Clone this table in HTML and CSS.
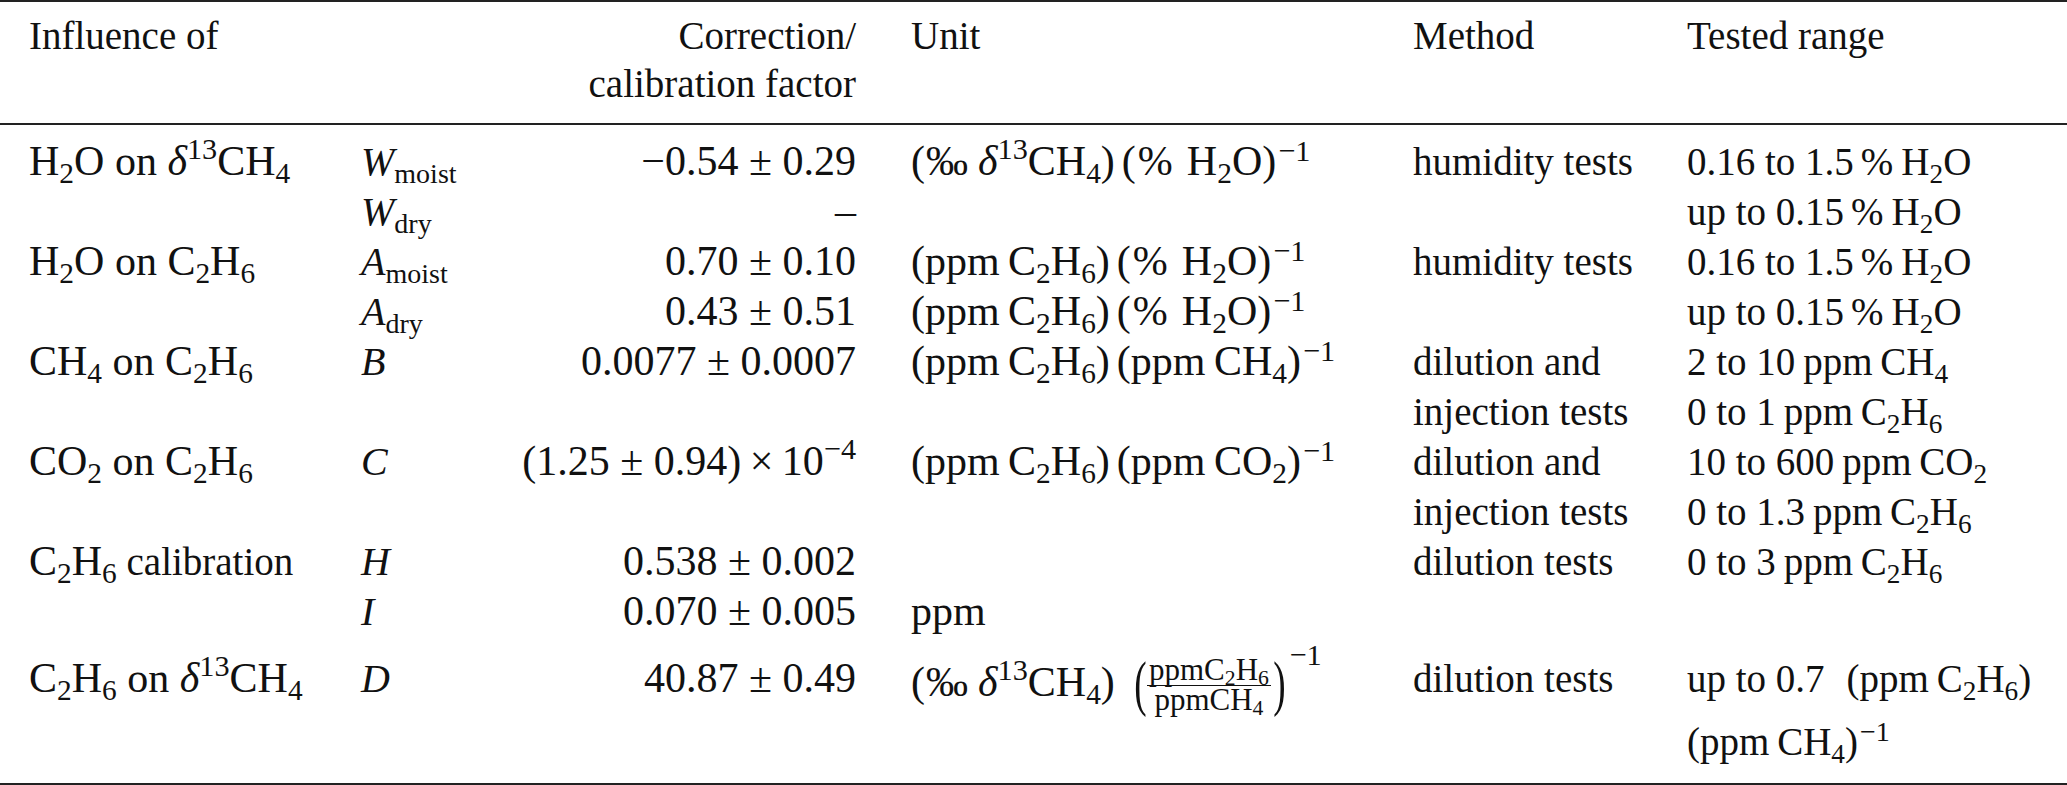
FILE: index.html
```html
<!DOCTYPE html>
<html lang="en">
<head>
<meta charset="utf-8">
<title>Correction factors</title>
<link rel="stylesheet" href="styles.css">
</head>
<body>
<table class="tbl">
  <colgroup>
    <col class="c1"><col class="c2"><col class="c3"><col class="c4"><col class="c5"><col class="c6">
  </colgroup>
  <thead>
    <tr>
      <th class="first">Influence of</th>
      <th></th>
      <th class="num">Correction/<br>calibration factor</th>
      <th class="unit">Unit</th>
      <th>Method</th>
      <th>Tested range</th>
    </tr>
  </thead>
  <tbody>
    <tr class="r-first">
      <td class="first"><span class="m">H<span class="sub">2</span>O on <i>δ</i><span class="sup">13</span>CH<span class="sub">4</span></span></td>
      <td><span class="ms"><i>W</i><span class="sub">moist</span></span></td>
      <td class="num"><span class="m">−0.54 ± 0.29</span></td>
      <td class="unit"><span class="m">(<span class="pm">‰</span><i>δ</i><span class="sup">13</span>CH<span class="sub">4</span>)<span class="tight"></span>(<span class="pc">%</span>H<span class="sub">2</span>O)<span class="sup2">−1</span></span></td>
      <td>humidity tests</td>
      <td>0.16 to 1.5<span class="pt">%</span>H<span class="sub">2</span>O</td>
    </tr>
    <tr>
      <td class="first"></td>
      <td><span class="ms"><i>W</i><span class="sub">dry</span></span></td>
      <td class="num"><span class="m">–</span></td>
      <td class="unit"></td>
      <td></td>
      <td>up to 0.15<span class="pt">%</span>H<span class="sub">2</span>O</td>
    </tr>
    <tr>
      <td class="first"><span class="m">H<span class="sub">2</span>O on C<span class="sub">2</span>H<span class="sub">6</span></span></td>
      <td><span class="ms"><i>A</i><span class="sub">moist</span></span></td>
      <td class="num"><span class="m">0.70 ± 0.10</span></td>
      <td class="unit"><span class="m">(ppm&thinsp;C<span class="sub">2</span>H<span class="sub">6</span>)<span class="tight"></span>(<span class="pc">%</span>H<span class="sub">2</span>O)<span class="sup2">−1</span></span></td>
      <td>humidity tests</td>
      <td>0.16 to 1.5<span class="pt">%</span>H<span class="sub">2</span>O</td>
    </tr>
    <tr>
      <td class="first"></td>
      <td><span class="ms"><i>A</i><span class="sub">dry</span></span></td>
      <td class="num"><span class="m">0.43 ± 0.51</span></td>
      <td class="unit"><span class="m">(ppm&thinsp;C<span class="sub">2</span>H<span class="sub">6</span>)<span class="tight"></span>(<span class="pc">%</span>H<span class="sub">2</span>O)<span class="sup2">−1</span></span></td>
      <td></td>
      <td>up to 0.15<span class="pt">%</span>H<span class="sub">2</span>O</td>
    </tr>
    <tr>
      <td class="first"><span class="m">CH<span class="sub">4</span> on C<span class="sub">2</span>H<span class="sub">6</span></span></td>
      <td><span class="ms"><i>B</i></span></td>
      <td class="num"><span class="m">0.0077 ± 0.0007</span></td>
      <td class="unit"><span class="m">(ppm&thinsp;C<span class="sub">2</span>H<span class="sub">6</span>)<span class="tight"></span>(ppm&thinsp;CH<span class="sub">4</span>)<span class="sup2">−1</span></span></td>
      <td>dilution and</td>
      <td>2 to 10&thinsp;ppm&thinsp;CH<span class="sub">4</span></td>
    </tr>
    <tr>
      <td class="first"></td>
      <td></td>
      <td class="num"></td>
      <td class="unit"></td>
      <td>injection tests</td>
      <td>0 to 1&thinsp;ppm&thinsp;C<span class="sub">2</span>H<span class="sub">6</span></td>
    </tr>
    <tr>
      <td class="first"><span class="m">CO<span class="sub">2</span> on C<span class="sub">2</span>H<span class="sub">6</span></span></td>
      <td><span class="ms"><i>C</i></span></td>
      <td class="num"><span class="m">(1.25 ± 0.94)&thinsp;×&thinsp;10<span class="sup">−4</span></span></td>
      <td class="unit"><span class="m">(ppm&thinsp;C<span class="sub">2</span>H<span class="sub">6</span>)<span class="tight"></span>(ppm&thinsp;CO<span class="sub">2</span>)<span class="sup2">−1</span></span></td>
      <td>dilution and</td>
      <td>10 to 600&thinsp;ppm&thinsp;CO<span class="sub">2</span></td>
    </tr>
    <tr>
      <td class="first"></td>
      <td></td>
      <td class="num"></td>
      <td class="unit"></td>
      <td>injection tests</td>
      <td>0 to 1.3&thinsp;ppm&thinsp;C<span class="sub">2</span>H<span class="sub">6</span></td>
    </tr>
    <tr>
      <td class="first"><span class="m">C<span class="sub">2</span>H<span class="sub">6</span></span> calibration</td>
      <td><span class="ms"><i>H</i></span></td>
      <td class="num"><span class="m">0.538 ± 0.002</span></td>
      <td class="unit"></td>
      <td>dilution tests</td>
      <td>0 to 3&thinsp;ppm&thinsp;C<span class="sub">2</span>H<span class="sub">6</span></td>
    </tr>
    <tr>
      <td class="first"></td>
      <td><span class="ms"><i>I</i></span></td>
      <td class="num"><span class="m">0.070 ± 0.005</span></td>
      <td class="unit"><span class="m">ppm</span></td>
      <td></td>
      <td></td>
    </tr>
    <tr class="r-frac">
      <td class="first"><span class="m">C<span class="sub">2</span>H<span class="sub">6</span> on <i>δ</i><span class="sup">13</span>CH<span class="sub">4</span></span></td>
      <td><span class="ms"><i>D</i></span></td>
      <td class="num"><span class="m">40.87 ± 0.49</span></td>
      <td class="unit"><span class="m low">(<span class="pm">‰</span><i>δ</i><span class="sup">13</span>CH<span class="sub">4</span>) <span class="paren lp">(</span><span class="frac"><span class="fn">ppmC<span class="fsub">2</span>H<span class="fsub">6</span></span><span class="fd">ppmCH<span class="fsub">4</span></span></span><span class="paren rp">)</span><span class="supx">−1</span></span></td>
      <td>dilution tests</td>
      <td>up to 0.7<span class="gap"></span>(ppm&thinsp;C<span class="sub">2</span>H<span class="sub">6</span>)</td>
    </tr>
    <tr class="r-last">
      <td class="first"></td>
      <td></td>
      <td class="num"></td>
      <td class="unit"></td>
      <td></td>
      <td>(ppm&thinsp;CH<span class="sub">4</span>)<span class="sup2">−1</span></td>
    </tr>
  </tbody>
</table>
</body>
</html>
```
FILE: styles.css
```css
html, body {
  margin: 0;
  padding: 0;
  background: #ffffff;
}

body {
  font-family: "Liberation Serif", "Times New Roman", serif;
  font-size: 39px;
  color: #111111;
}

.tbl {
  width: 2067px;
  table-layout: fixed;
  border-collapse: separate;
  border-spacing: 0;
}

col.c1 { width: 361px; }
col.c2 { width: 150px; }
col.c3 { width: 345px; }
col.c4 { width: 557px; }
col.c5 { width: 274px; }
col.c6 { width: 380px; }

th, td {
  padding: 0;
  text-align: left;
  vertical-align: top;
  font-weight: normal;
  white-space: nowrap;
  line-height: 50px;
}

.first { padding-left: 29px; }
.num { text-align: right; }
.unit { padding-left: 55px; }

thead th {
  line-height: 48px;
  padding-top: 10px;
  padding-bottom: 15px;
  border-top: 2px solid #222222;
  border-bottom: 2px solid #222222;
}

thead th.first { padding-left: 29px; }
thead th.unit { padding-left: 55px; }

tbody tr.r-first td { padding-top: 12px; }
tbody tr.r-frac td { padding-top: 17px; height: 50px; }
tbody tr.r-last td {
  padding-top: 13px;
  padding-bottom: 16px;
  border-bottom: 2px solid #222222;
}

i { font-style: italic; }

/* math-set runs are typeset a little larger and looser than body text */
.m {
  font-size: 42px;
  line-height: 0;
}

.ms {
  font-size: 40px;
  line-height: 0;
}

.sub {
  font-size: 0.7em;
  line-height: 0;
  vertical-align: -8px;
}

.sup {
  font-size: 0.72em;
  line-height: 0;
  vertical-align: 16px;
}

.sup2 {
  font-size: 0.72em;
  line-height: 0;
  vertical-align: 14px;
  margin-left: 2px;
}

.pm { margin: 0 10px 0 1px; }
.pc { margin: 0 14px 0 2px; }
.pt { margin: 0 8px 0 7px; }
.tight { display: inline-block; width: 7px; }
.gap { display: inline-block; width: 22px; }

.low {
  vertical-align: -4px;
}

.paren {
  display: inline-block;
  font-size: 62px;
  line-height: 0;
  vertical-align: -8px;
  transform: scaleX(0.6);
}

.lp { margin: 0 -4px 0 5px; }
.rp { margin: 0 -4px 0 -2px; }

.frac {
  display: inline-flex;
  flex-direction: column;
  align-items: center;
  font-size: 31px;
  vertical-align: 16px;
  margin: 0 0 -11px;
}

.fn {
  line-height: 30px;
  padding: 0 2px;
  border-bottom: 1.5px solid #111111;
}

.fd {
  line-height: 28px;
  padding: 0 2px;
}

.fsub {
  font-size: 0.7em;
  line-height: 0;
  vertical-align: -5px;
}

.supx {
  font-size: 0.72em;
  line-height: 0;
  vertical-align: 31px;
  margin-left: 4px;
}
```
